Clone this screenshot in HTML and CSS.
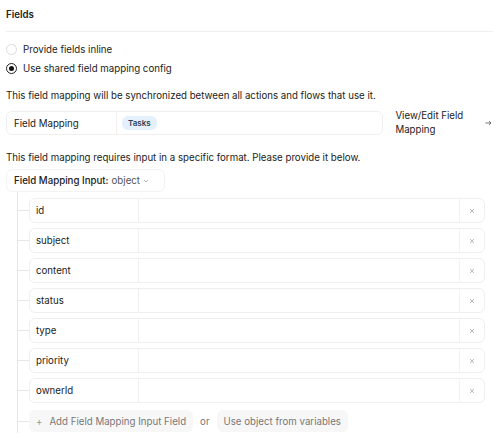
FILE: index.html
```html
<!DOCTYPE html>
<html>
<head>
<meta charset="utf-8">
<link rel="stylesheet" href="styles.css">
</head>
<body>
<div class="page">
  <div class="title">Fields</div>
  <div class="divider"></div>
  <div class="radios">
    <label class="radio"><span class="dot"></span>Provide fields inline</label>
    <label class="radio checked"><span class="dot"></span>Use shared field mapping config</label>
  </div>
  <p class="note first">This field mapping will be synchronized between all actions and flows that use it.</p>
  <div class="mapping-row">
    <div class="mapping-box">
      <div class="mapping-label">Field Mapping</div>
      <div class="mapping-value"><span class="chip">Tasks</span></div>
    </div>
    <div class="view-link">View/Edit Field<br>Mapping</div>
    <svg class="arrow" width="7" height="6" viewBox="0 0 7 6"><path d="M0.5 3H6M4 1l2 2-2 2" fill="none" stroke="#555" stroke-width="0.8"/></svg>
  </div>
  <p class="note second">This field mapping requires input in a specific format. Please provide it below.</p>
  <div class="fmi">Field Mapping Input: <span class="type">object</span><svg class="chev" width="6" height="4" viewBox="0 0 6 4"><path d="M1 1l2 2 2-2" fill="none" stroke="#999" stroke-width="0.7"/></svg></div>
  <div class="tree">
    <div class="item"><div class="field"><div class="fname">id</div><div class="fval"></div><div class="fx"><svg width="6" height="6" viewBox="0 0 6 6"><path d="M1 1l4 4M5 1l-4 4" stroke="#aaa" stroke-width="0.8"/></svg></div></div></div>
    <div class="item"><div class="field"><div class="fname">subject</div><div class="fval"></div><div class="fx"><svg width="6" height="6" viewBox="0 0 6 6"><path d="M1 1l4 4M5 1l-4 4" stroke="#aaa" stroke-width="0.8"/></svg></div></div></div>
    <div class="item"><div class="field"><div class="fname">content</div><div class="fval"></div><div class="fx"><svg width="6" height="6" viewBox="0 0 6 6"><path d="M1 1l4 4M5 1l-4 4" stroke="#aaa" stroke-width="0.8"/></svg></div></div></div>
    <div class="item"><div class="field"><div class="fname">status</div><div class="fval"></div><div class="fx"><svg width="6" height="6" viewBox="0 0 6 6"><path d="M1 1l4 4M5 1l-4 4" stroke="#aaa" stroke-width="0.8"/></svg></div></div></div>
    <div class="item"><div class="field"><div class="fname">type</div><div class="fval"></div><div class="fx"><svg width="6" height="6" viewBox="0 0 6 6"><path d="M1 1l4 4M5 1l-4 4" stroke="#aaa" stroke-width="0.8"/></svg></div></div></div>
    <div class="item"><div class="field"><div class="fname">priority</div><div class="fval"></div><div class="fx"><svg width="6" height="6" viewBox="0 0 6 6"><path d="M1 1l4 4M5 1l-4 4" stroke="#aaa" stroke-width="0.8"/></svg></div></div></div>
    <div class="item"><div class="field"><div class="fname">ownerId</div><div class="fval"></div><div class="fx"><svg width="6" height="6" viewBox="0 0 6 6"><path d="M1 1l4 4M5 1l-4 4" stroke="#aaa" stroke-width="0.8"/></svg></div></div></div>
    <div class="item last">
      <div class="actions">
        <span class="btn"><span class="plus">+</span>Add Field Mapping Input Field</span>
        <span class="or">or</span>
        <span class="btn">Use object from variables</span>
      </div>
    </div>
  </div>
</div>
</body>
</html>
```

FILE: styles.css
```css
* { box-sizing: border-box; }
html, body { margin: 0; padding: 0; background: #fff; }
body {
  font-family: Inter, "Noto Sans", sans-serif;
  font-size: 9.7px;
  color: #222;
}
.page { padding: 8px 6px 0 6px; width: 498px; }
.title { font-weight: 600; line-height: 14px; }
.divider { height: 1px; background: #f0f0f0; margin: 9px 0 0 0; width: 487px; }
.radios { display: flex; flex-direction: column; gap: 6px; margin-top: 11px; }
.radio { display: flex; align-items: center; gap: 6px; line-height: 12px; height: 13px; }
.dot {
  width: 11px; height: 11px; border-radius: 50%;
  border: 1px solid #dcdcdc; display: inline-block; position: relative; flex: none;
}
.radio.checked .dot { border-color: #222; }
.radio.checked .dot::after {
  content: ""; position: absolute; left: 2px; top: 2px;
  width: 5px; height: 5px; border-radius: 50%; background: #111;
}
.note { margin: 0; line-height: 12px; }
.note.first { margin-top: 15px; }
.mapping-row { display: flex; align-items: center; margin-top: 9px; height: 24px; }
.mapping-box {
  display: flex; width: 379px; height: 24px;
  border: 1px solid #efefef; border-radius: 6px;
}
.mapping-label { width: 110px; padding-left: 7px; display: flex; align-items: center; border-right: 1px solid #efefef; }
.mapping-value { display: flex; align-items: center; padding-left: 5px; }
.chip {
  background: #e4f0fb; color: #2d3f55; font-size: 8px; font-weight: 600;
  padding: 2px 6px; border-radius: 6px; line-height: 10px;
}
.view-link { margin-left: 12px; line-height: 14px; width: 80px; }
.arrow { margin-left: 10px; }
.note.second { margin-top: 17px; }
.fmi {
  margin-top: 5px; width: 159px; height: 23px; display: flex; align-items: center;
  padding-left: 7px; font-weight: 500;
  border: 1px solid #f3f3f3; border-radius: 6px;
}
.fmi .type { font-weight: 400; color: #555; margin-left: 3px; }
.chev { margin-left: 3px; }
.tree { margin-left: 11px; border-left: 1px solid #e6e6e6; padding-top: 6px; display: flex; flex-direction: column; gap: 5px; height: 241px; }
.item { display: flex; align-items: center; }
.item.last { margin-top: 2px; }
.item::before { content: ""; width: 11px; height: 1px; background: #e6e6e6; flex: none; }
.field {
  display: flex; width: 456px; height: 25px;
  border: 1px solid #efefef; border-radius: 6px;
}
.fname { width: 109px; padding-left: 6px; display: flex; align-items: center; border-right: 1px solid #efefef; }
.fval { flex: 1; }
.fx { width: 25px; border-left: 1px solid #f3f3f3; display: flex; align-items: center; justify-content: center; }
.actions { display: flex; align-items: center; }
.btn {
  background: #f7f7f8; color: #777; height: 22px; display: flex; align-items: center;
  padding: 0 7px; border-radius: 6px;
}
.plus { margin-right: 7px; color: #999; }
.or { color: #777; margin: 0 7px; }
```
